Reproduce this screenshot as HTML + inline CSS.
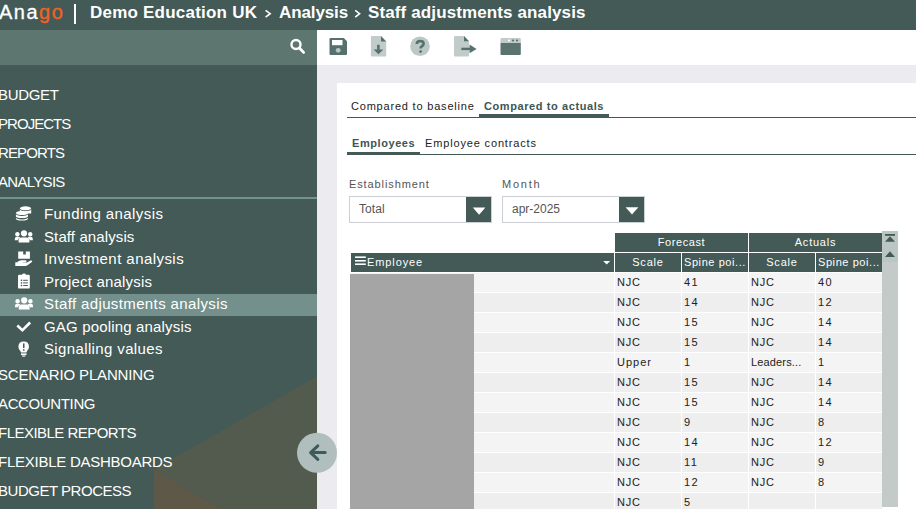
<!DOCTYPE html>
<html><head><meta charset="utf-8"><style>
*{margin:0;padding:0;box-sizing:border-box}
html,body{width:916px;height:509px;overflow:hidden;background:#ebebf0;font-family:"Liberation Sans",sans-serif;position:relative}
.a{position:absolute;white-space:nowrap;line-height:1}
#hdr{position:absolute;left:0;top:0;width:916px;height:30px;background:#435a56}
#side{position:absolute;left:0;top:30px;width:317px;height:479px;background:#435a56;overflow:hidden}
#search{position:absolute;left:0;top:0;width:317px;height:35px;background:#5d7770}
#tool{position:absolute;left:317px;top:30px;width:599px;height:35px;background:#fff}
#card{position:absolute;left:337px;top:83px;width:579px;height:426px;background:#fff}
.top{color:#fff;font-size:15px}
.sub{color:#fff;font-size:15px}
.tab{font-size:11px;color:#222}
.tabA{font-size:11px;color:#3d5654;font-weight:bold}
.lbl{font-size:11px;color:#555}
.th{position:absolute;background:#435a56;color:#fff;font-size:11px;line-height:19px;height:19px;white-space:nowrap;overflow:hidden}
.c{position:absolute;font-size:11px;color:#222;line-height:1;white-space:nowrap}
</style></head><body>
<div id="hdr">
<div class="a" id="logo" style="left:-1px;top:1.5px;font-size:20px;color:#fff;letter-spacing:1.5px;-webkit-text-stroke:0.3px #fff">Ana<span style="color:#f06424;-webkit-text-stroke:0.3px #f06424">go</span></div>
<div class="a" style="left:74px;top:4px;width:1.6px;height:20px;background:#fff"></div>
<div class="a" style="left:90px;top:4px;font-size:17px;font-weight:bold;color:#fff;letter-spacing:0.22px">Demo Education UK</div>
<div class="a" style="left:279px;top:4px;font-size:17px;font-weight:bold;color:#fff;letter-spacing:-0.11px">Analysis</div>
<svg class="a" style="left:0;top:0" width="400" height="30"><path d="M265.6 10.3 L270.2 13.7 L265.6 17.1 M355.2 10.3 L359.6 13.7 L355.2 17.1" fill="none" stroke="#fff" stroke-width="1.6"/></svg>
<div class="a" style="left:368px;top:4px;font-size:17px;font-weight:bold;color:#fff;letter-spacing:0.12px">Staff adjustments analysis</div>
</div>
<div id="side"><div id="search"></div>
<svg class="a" style="left:0;top:0" width="317" height="479"><path d="M153.8 439.5 L317 346.2 V479 H221 Z" fill="#525b4e"/><path d="M153.8 439.5 L221 479 H153.8 Z" fill="#5e5849"/></svg>
<div class="a top" style="left:-2px;top:57px;letter-spacing:-0.34px">BUDGET</div>
<div class="a top" style="left:-2px;top:86px;letter-spacing:-0.957px">PROJECTS</div>
<div class="a top" style="left:-2px;top:115px;letter-spacing:-0.883px">REPORTS</div>
<div class="a top" style="left:-2px;top:144px;letter-spacing:-0.7px">ANALYSIS</div>
<div class="a top" style="left:-2px;top:337px;letter-spacing:-0.162px">SCENARIO PLANNING</div>
<div class="a top" style="left:-2px;top:366px;letter-spacing:-0.367px">ACCOUNTING</div>
<div class="a top" style="left:-2px;top:395px;letter-spacing:-0.527px">FLEXIBLE REPORTS</div>
<div class="a top" style="left:-2px;top:424px;letter-spacing:-0.256px">FLEXIBLE DASHBOARDS</div>
<div class="a top" style="left:-2px;top:453px;letter-spacing:-0.477px">BUDGET PROCESS</div>
<div class="a" style="left:0;top:167px;width:317px;height:2px;background:#739290"></div>
<div class="a" style="left:0;top:264px;width:317px;height:22px;background:#73908c"></div>
<div class="a sub" style="left:44px;top:176px;letter-spacing:0.427px">Funding analysis</div>
<div class="a sub" style="left:44px;top:199px;letter-spacing:0.108px">Staff analysis</div>
<div class="a sub" style="left:44px;top:221px;letter-spacing:0.439px">Investment analysis</div>
<div class="a sub" style="left:44px;top:244px;letter-spacing:0.2px">Project analysis</div>
<div class="a sub" style="left:44px;top:266px;letter-spacing:0.376px">Staff adjustments analysis</div>
<div class="a sub" style="left:44px;top:289px;letter-spacing:0.168px">GAG pooling analysis</div>
<div class="a sub" style="left:44px;top:311px;letter-spacing:0.369px">Signalling values</div>
</div>
<div id="tool"></div><div id="card"></div>
<div class="a tab" style="left:351px;top:101px;letter-spacing:0.8px">Compared to baseline</div>
<div class="a tabA" style="left:484px;top:101px;letter-spacing:0.59px">Compared to actuals</div>
<div class="a" style="left:347px;top:117px;width:569px;height:1px;background:#435a56"></div>
<div class="a" style="left:479px;top:114px;width:130px;height:3px;background:#435a56"></div>
<div class="a tabA" style="left:352px;top:138px;letter-spacing:0.575px">Employees</div>
<div class="a tab" style="left:425px;top:138px;letter-spacing:0.847px">Employee contracts</div>
<div class="a" style="left:347px;top:154px;width:569px;height:1px;background:#435a56"></div>
<div class="a" style="left:347px;top:152px;width:73px;height:3px;background:#435a56"></div>
<div class="a lbl" style="left:349px;top:179px;letter-spacing:0.89px">Establishment</div>
<div class="a lbl" style="left:502px;top:179px;letter-spacing:1.77px">Month</div>
<div class="a" style="left:349px;top:196px;width:143px;height:27px;border:1px solid #ccd0d4;background:#fff"></div>
<div class="a" style="left:466px;top:197px;width:25px;height:25px;background:#435a56"></div>
<div class="a" style="left:502px;top:196px;width:143px;height:27px;border:1px solid #ccd0d4;background:#fff"></div>
<div class="a" style="left:619px;top:197px;width:25px;height:25px;background:#435a56"></div>
<div class="a lbl" style="left:359px;top:203px;font-size:12px;letter-spacing:0.1px">Total</div>
<div class="a lbl" style="left:512px;top:203px;font-size:12px">apr-2025</div>
<div class="th" style="left:615px;top:233px;width:133px;text-align:center;letter-spacing:0.586px">Forecast</div>
<div class="th" style="left:749px;top:233px;width:133px;text-align:center;letter-spacing:0.767px">Actuals</div>
<div class="th" style="left:351px;top:253px;width:263px;padding-left:16px;letter-spacing:0.9px">Employee</div>
<div class="th" style="left:615px;top:253px;width:66px;text-align:center;letter-spacing:0.825px">Scale</div>
<div class="th" style="left:682px;top:253px;width:66px;padding-left:2px;letter-spacing:0.58px">Spine poi...</div>
<div class="th" style="left:749px;top:253px;width:66px;text-align:center;letter-spacing:0.825px">Scale</div>
<div class="th" style="left:816px;top:253px;width:66px;padding-left:2px;letter-spacing:0.58px">Spine poi...</div>
<div class="a" style="left:350px;top:273px;width:264px;height:19px;background:#f4f4f4"></div>
<div class="a" style="left:615px;top:273px;width:66px;height:19px;background:#f4f4f4"></div>
<div class="a" style="left:682px;top:273px;width:66px;height:19px;background:#f4f4f4"></div>
<div class="a" style="left:749px;top:273px;width:66px;height:19px;background:#f4f4f4"></div>
<div class="a" style="left:816px;top:273px;width:66px;height:19px;background:#f4f4f4"></div>
<div class="c" style="left:617px;top:277px;letter-spacing:0.75px">NJC</div>
<div class="c" style="left:684px;top:277px;letter-spacing:1.4px">41</div>
<div class="c" style="left:751px;top:277px;letter-spacing:0.75px">NJC</div>
<div class="c" style="left:818px;top:277px;letter-spacing:1.4px">40</div>
<div class="a" style="left:350px;top:293px;width:264px;height:19px;background:#eeeeee"></div>
<div class="a" style="left:615px;top:293px;width:66px;height:19px;background:#eeeeee"></div>
<div class="a" style="left:682px;top:293px;width:66px;height:19px;background:#eeeeee"></div>
<div class="a" style="left:749px;top:293px;width:66px;height:19px;background:#eeeeee"></div>
<div class="a" style="left:816px;top:293px;width:66px;height:19px;background:#eeeeee"></div>
<div class="c" style="left:617px;top:297px;letter-spacing:0.75px">NJC</div>
<div class="c" style="left:684px;top:297px;letter-spacing:1.4px">14</div>
<div class="c" style="left:751px;top:297px;letter-spacing:0.75px">NJC</div>
<div class="c" style="left:818px;top:297px;letter-spacing:1.4px">12</div>
<div class="a" style="left:350px;top:313px;width:264px;height:19px;background:#f4f4f4"></div>
<div class="a" style="left:615px;top:313px;width:66px;height:19px;background:#f4f4f4"></div>
<div class="a" style="left:682px;top:313px;width:66px;height:19px;background:#f4f4f4"></div>
<div class="a" style="left:749px;top:313px;width:66px;height:19px;background:#f4f4f4"></div>
<div class="a" style="left:816px;top:313px;width:66px;height:19px;background:#f4f4f4"></div>
<div class="c" style="left:617px;top:317px;letter-spacing:0.75px">NJC</div>
<div class="c" style="left:684px;top:317px;letter-spacing:1.4px">15</div>
<div class="c" style="left:751px;top:317px;letter-spacing:0.75px">NJC</div>
<div class="c" style="left:818px;top:317px;letter-spacing:1.4px">14</div>
<div class="a" style="left:350px;top:333px;width:264px;height:19px;background:#eeeeee"></div>
<div class="a" style="left:615px;top:333px;width:66px;height:19px;background:#eeeeee"></div>
<div class="a" style="left:682px;top:333px;width:66px;height:19px;background:#eeeeee"></div>
<div class="a" style="left:749px;top:333px;width:66px;height:19px;background:#eeeeee"></div>
<div class="a" style="left:816px;top:333px;width:66px;height:19px;background:#eeeeee"></div>
<div class="c" style="left:617px;top:337px;letter-spacing:0.75px">NJC</div>
<div class="c" style="left:684px;top:337px;letter-spacing:1.4px">15</div>
<div class="c" style="left:751px;top:337px;letter-spacing:0.75px">NJC</div>
<div class="c" style="left:818px;top:337px;letter-spacing:1.4px">14</div>
<div class="a" style="left:350px;top:353px;width:264px;height:19px;background:#f4f4f4"></div>
<div class="a" style="left:615px;top:353px;width:66px;height:19px;background:#f4f4f4"></div>
<div class="a" style="left:682px;top:353px;width:66px;height:19px;background:#f4f4f4"></div>
<div class="a" style="left:749px;top:353px;width:66px;height:19px;background:#f4f4f4"></div>
<div class="a" style="left:816px;top:353px;width:66px;height:19px;background:#f4f4f4"></div>
<div class="c" style="left:617px;top:357px;letter-spacing:1.0px">Upper</div>
<div class="c" style="left:684px;top:357px;letter-spacing:1.4px">1</div>
<div class="c" style="left:751px;top:357px;letter-spacing:0.15px">Leaders...</div>
<div class="c" style="left:818px;top:357px;letter-spacing:1.4px">1</div>
<div class="a" style="left:350px;top:373px;width:264px;height:19px;background:#eeeeee"></div>
<div class="a" style="left:615px;top:373px;width:66px;height:19px;background:#eeeeee"></div>
<div class="a" style="left:682px;top:373px;width:66px;height:19px;background:#eeeeee"></div>
<div class="a" style="left:749px;top:373px;width:66px;height:19px;background:#eeeeee"></div>
<div class="a" style="left:816px;top:373px;width:66px;height:19px;background:#eeeeee"></div>
<div class="c" style="left:617px;top:377px;letter-spacing:0.75px">NJC</div>
<div class="c" style="left:684px;top:377px;letter-spacing:1.4px">15</div>
<div class="c" style="left:751px;top:377px;letter-spacing:0.75px">NJC</div>
<div class="c" style="left:818px;top:377px;letter-spacing:1.4px">14</div>
<div class="a" style="left:350px;top:393px;width:264px;height:19px;background:#f4f4f4"></div>
<div class="a" style="left:615px;top:393px;width:66px;height:19px;background:#f4f4f4"></div>
<div class="a" style="left:682px;top:393px;width:66px;height:19px;background:#f4f4f4"></div>
<div class="a" style="left:749px;top:393px;width:66px;height:19px;background:#f4f4f4"></div>
<div class="a" style="left:816px;top:393px;width:66px;height:19px;background:#f4f4f4"></div>
<div class="c" style="left:617px;top:397px;letter-spacing:0.75px">NJC</div>
<div class="c" style="left:684px;top:397px;letter-spacing:1.4px">15</div>
<div class="c" style="left:751px;top:397px;letter-spacing:0.75px">NJC</div>
<div class="c" style="left:818px;top:397px;letter-spacing:1.4px">14</div>
<div class="a" style="left:350px;top:413px;width:264px;height:19px;background:#eeeeee"></div>
<div class="a" style="left:615px;top:413px;width:66px;height:19px;background:#eeeeee"></div>
<div class="a" style="left:682px;top:413px;width:66px;height:19px;background:#eeeeee"></div>
<div class="a" style="left:749px;top:413px;width:66px;height:19px;background:#eeeeee"></div>
<div class="a" style="left:816px;top:413px;width:66px;height:19px;background:#eeeeee"></div>
<div class="c" style="left:617px;top:417px;letter-spacing:0.75px">NJC</div>
<div class="c" style="left:684px;top:417px;letter-spacing:1.4px">9</div>
<div class="c" style="left:751px;top:417px;letter-spacing:0.75px">NJC</div>
<div class="c" style="left:818px;top:417px;letter-spacing:1.4px">8</div>
<div class="a" style="left:350px;top:433px;width:264px;height:19px;background:#f4f4f4"></div>
<div class="a" style="left:615px;top:433px;width:66px;height:19px;background:#f4f4f4"></div>
<div class="a" style="left:682px;top:433px;width:66px;height:19px;background:#f4f4f4"></div>
<div class="a" style="left:749px;top:433px;width:66px;height:19px;background:#f4f4f4"></div>
<div class="a" style="left:816px;top:433px;width:66px;height:19px;background:#f4f4f4"></div>
<div class="c" style="left:617px;top:437px;letter-spacing:0.75px">NJC</div>
<div class="c" style="left:684px;top:437px;letter-spacing:1.4px">14</div>
<div class="c" style="left:751px;top:437px;letter-spacing:0.75px">NJC</div>
<div class="c" style="left:818px;top:437px;letter-spacing:1.4px">12</div>
<div class="a" style="left:350px;top:453px;width:264px;height:19px;background:#eeeeee"></div>
<div class="a" style="left:615px;top:453px;width:66px;height:19px;background:#eeeeee"></div>
<div class="a" style="left:682px;top:453px;width:66px;height:19px;background:#eeeeee"></div>
<div class="a" style="left:749px;top:453px;width:66px;height:19px;background:#eeeeee"></div>
<div class="a" style="left:816px;top:453px;width:66px;height:19px;background:#eeeeee"></div>
<div class="c" style="left:617px;top:457px;letter-spacing:0.75px">NJC</div>
<div class="c" style="left:684px;top:457px;letter-spacing:1.4px">11</div>
<div class="c" style="left:751px;top:457px;letter-spacing:0.75px">NJC</div>
<div class="c" style="left:818px;top:457px;letter-spacing:1.4px">9</div>
<div class="a" style="left:350px;top:473px;width:264px;height:19px;background:#f4f4f4"></div>
<div class="a" style="left:615px;top:473px;width:66px;height:19px;background:#f4f4f4"></div>
<div class="a" style="left:682px;top:473px;width:66px;height:19px;background:#f4f4f4"></div>
<div class="a" style="left:749px;top:473px;width:66px;height:19px;background:#f4f4f4"></div>
<div class="a" style="left:816px;top:473px;width:66px;height:19px;background:#f4f4f4"></div>
<div class="c" style="left:617px;top:477px;letter-spacing:0.75px">NJC</div>
<div class="c" style="left:684px;top:477px;letter-spacing:1.4px">12</div>
<div class="c" style="left:751px;top:477px;letter-spacing:0.75px">NJC</div>
<div class="c" style="left:818px;top:477px;letter-spacing:1.4px">8</div>
<div class="a" style="left:350px;top:493px;width:264px;height:19px;background:#eeeeee"></div>
<div class="a" style="left:615px;top:493px;width:66px;height:19px;background:#eeeeee"></div>
<div class="a" style="left:682px;top:493px;width:66px;height:19px;background:#eeeeee"></div>
<div class="a" style="left:749px;top:493px;width:66px;height:19px;background:#eeeeee"></div>
<div class="a" style="left:816px;top:493px;width:66px;height:19px;background:#eeeeee"></div>
<div class="c" style="left:617px;top:497px;letter-spacing:0.75px">NJC</div>
<div class="c" style="left:684px;top:497px;letter-spacing:1.4px">5</div>
<div class="a" style="left:350px;top:274px;width:124px;height:235px;background:#a5a5a5"></div>
<div class="a" style="left:882px;top:231px;width:16px;height:276px;background:#c3cac8"></div>
<svg class="a" style="left:0;top:0" width="916" height="509" viewBox="0 0 916 509">
<!-- search -->
<circle cx="296" cy="44.5" r="4.5" fill="none" stroke="#fff" stroke-width="2.4"/>
<line x1="299.4" y1="48" x2="303.6" y2="52.4" stroke="#fff" stroke-width="2.8" stroke-linecap="round"/>
<!-- save -->
<path d="M330.5 38 H343.8 L347 41.2 V54 Q347 55 346 55 H330.5 Q329.5 55 329.5 54 V39 Q329.5 38 330.5 38 Z" fill="#56716d"/>
<rect x="332" y="40" width="10.5" height="5.2" fill="#fff"/>
<circle cx="338.2" cy="50.3" r="2.4" fill="#b9c5c3"/>
<!-- file download -->
<path d="M372 36 H381 L386.2 41.4 V55.5 Q386.2 56.6 385.1 56.6 H372 Q370.9 56.6 370.9 55.5 V37.1 Q370.9 36 372 36 Z" fill="#c1cbc9"/>
<path d="M381 36 L386.2 41.4 H381 Z" fill="#56716d"/>
<rect x="377.1" y="44.8" width="2.6" height="5" fill="#56716d"/>
<path d="M373.6 49.4 H383.4 L378.5 54.2 Z" fill="#56716d"/>
<!-- help -->
<circle cx="420" cy="46.3" r="9.8" fill="#bcc8c6"/>
<path d="M416.8 44 Q417 41 420.3 41 Q423.6 41.1 423.6 43.8 Q423.6 45.5 421.6 46.5 Q420.6 47 420.6 48.6" fill="none" stroke="#56716d" stroke-width="2.6"/>
<circle cx="420.6" cy="51.6" r="1.4" fill="#56716d"/>
<!-- file export -->
<path d="M455 36 H464 L469 41.2 V55.5 Q469 56.5 468 56.5 H455 Q454 56.5 454 55.5 V37 Q454 36 455 36 Z" fill="#c1cbc9"/>
<path d="M464 36 L469 41.2 H464 Z" fill="#56716d"/>
<rect x="461.3" y="47.7" width="9" height="2.4" fill="#56716d"/>
<path d="M469.5 44.6 L476.6 48.9 L469.5 53.2 Z" fill="#56716d"/>
<!-- window -->
<path d="M501.5 38 H519.8 Q520.8 38 520.8 39 V43 H500.5 V39 Q500.5 38 501.5 38 Z" fill="#c1cbc9"/>
<path d="M500.5 43 H520.8 V54 Q520.8 55 519.8 55 H501.5 Q500.5 55 500.5 54 Z" fill="#5a736f"/>
<circle cx="509" cy="40.5" r="1.1" fill="#fff"/>
<circle cx="513" cy="40.5" r="1.1" fill="#5a736f"/>
<circle cx="517" cy="40.5" r="1.1" fill="#5a736f"/>
<!-- sidebar icons -->
<g fill="#fff">
<ellipse cx="25.5" cy="208.3" rx="5.7" ry="2"/>
<path d="M19.8 209 V213.5 H31.2 V209 Q31.2 211 25.5 211.2 Q19.8 211 19.8 209Z"/>
<ellipse cx="22" cy="213" rx="6.1" ry="2.1"/>
<path d="M15.9 214 V216 Q15.9 218 22 218 Q28 218 28 216 V214 Q28 215.8 22 215.9 Q15.9 215.8 15.9 214Z"/>
<path d="M15.9 217.5 V218.8 Q15.9 220.6 22 220.6 Q28 220.6 28 218.8 V217.5 Q28 219.3 22 219.4 Q15.9 219.3 15.9 217.5Z"/>
</g>
<g id="users" fill="#fff">
<circle cx="24" cy="233.3" r="3.1"/>
<circle cx="17.4" cy="234.2" r="2.2"/>
<circle cx="30.2" cy="234.2" r="2.2"/>
<path d="M18.6 242.6 V240.2 Q18.6 237.4 21.4 237.4 H26.6 Q29.4 237.4 29.4 240.2 V242.6 Z"/>
<path d="M14.8 240.2 V239 Q14.8 236.8 16.8 236.8 H18.2 Q19.6 236.8 20.2 237.6 Q18 238.6 17.8 240.2 Z"/>
<path d="M32.8 240.2 V239 Q32.8 236.8 30.8 236.8 H29.4 Q28 236.8 27.6 237.6 Q29.6 238.6 29.8 240.2 Z"/>
</g>
<use href="#users" transform="translate(0.2,67)"/>
<g fill="#fff">
<path d="M18.2 251.6 H23.2 V254.4 H25.8 V251.6 H29.9 V258.8 H18.2 Z"/>
<path d="M15.3 262.2 H17.2 Q19 260.2 21.5 260.2 H25.5 Q26.6 260.3 26.6 261.3 Q26.5 262.3 25.4 262.4 H22 Q24.5 263.2 27 262.4 L30.6 260.6 Q31.8 260.2 32.2 261 Q32.3 261.7 31.6 262.2 L27.8 265 Q26.6 266 25 266 H15.3 Z"/>
<path d="M18 276 Q18 274.8 19.2 274.8 H22 Q22.6 273.6 24 273.6 Q25.4 273.6 26 274.8 H28.6 Q29.8 274.8 29.8 276 V287.4 Q29.8 288.6 28.6 288.6 H19.2 Q18 288.6 18 287.4 Z"/>
<path d="M16.4 326.4 L18.2 324.6 L22.4 328.6 L29.2 321.6 L31.1 323.4 L22.4 332 Z"/>
<path d="M23.7 341.4 Q28.9 341.5 29 346.6 Q29 348.8 27.4 350.6 Q26.6 351.6 26.5 352.6 H20.9 Q20.8 351.6 20 350.6 Q18.4 348.8 18.4 346.6 Q18.5 341.5 23.7 341.4 Z"/>
<rect x="21" y="353.4" width="5.5" height="1.6"/>
<path d="M21.6 355.6 H25.9 Q25.5 356.8 23.7 356.8 Q21.9 356.8 21.6 355.6Z"/>
</g>
<g fill="#435a56">
<rect x="20.8" y="279.6" width="1.4" height="1.4"/><rect x="23.2" y="279.8" width="4.6" height="1"/>
<rect x="20.8" y="282.2" width="1.4" height="1.4"/><rect x="23.2" y="282.4" width="4.6" height="1"/>
<rect x="20.8" y="284.8" width="1.4" height="1.4"/><rect x="23.2" y="285" width="4.6" height="1"/>
<rect x="23" y="343.4" width="1.5" height="4.6"/><rect x="23" y="349.2" width="1.5" height="1.5"/>
</g>
<!-- dropdown triangles -->
<path d="M472.8 207.6 H485.4 L479.1 214.8 Z" fill="#fff"/>
<path d="M625.6 207.2 H638.4 L632 214.6 Z" fill="#fff"/>
<!-- hamburger -->
<g fill="#fff"><rect x="355" y="256.4" width="10.8" height="1.6"/><rect x="355" y="260" width="10.8" height="1.6"/><rect x="355" y="263.4" width="10.8" height="1.6"/></g>
<path d="M603.2 261.1 H610.2 L606.7 264.6 Z" fill="#fff"/>
<!-- scrollbar buttons -->
<rect x="882" y="231" width="16" height="31" fill="#b9c6c2"/>
<rect x="885" y="234" width="10" height="1.8" fill="#435a56"/>
<path d="M885 241.8 L890 236.2 L895 241.8 Z" fill="#435a56"/>
<path d="M885 257 L890 251.2 L895 257 Z" fill="#435a56"/>
<!-- collapse button -->
<circle cx="317" cy="452.8" r="20" fill="#b1bebe"/>
<path d="M317.8 445.8 L310.6 452.6 L317.8 459.4 M310.8 452.6 H325.2" fill="none" stroke="#3e5a5c" stroke-width="3" stroke-linecap="round" stroke-linejoin="round"/>
</svg>
</body></html>
